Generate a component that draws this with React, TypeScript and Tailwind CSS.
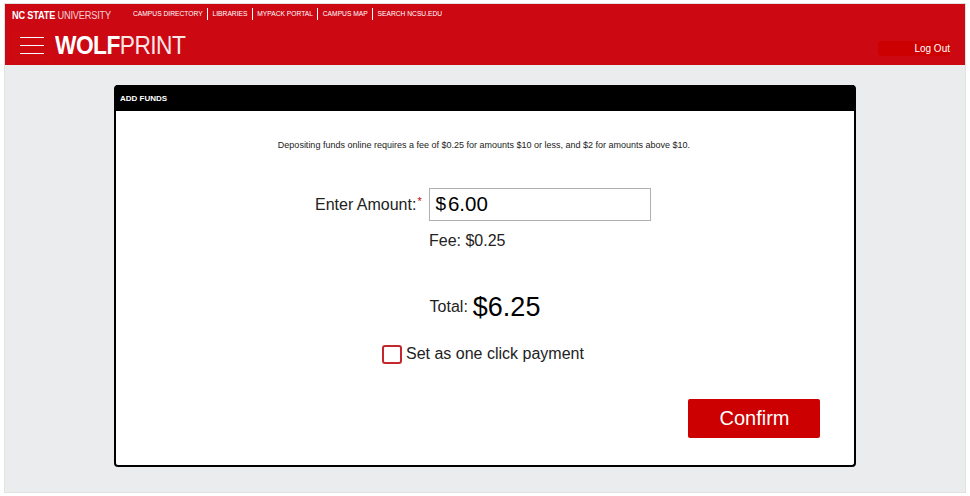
export default function App() {
  const links = ["CAMPUS DIRECTORY", "LIBRARIES", "MYPACK PORTAL", "CAMPUS MAP", "SEARCH NCSU.EDU"];
  return (
    <div className="w-[970px] h-[496px] overflow-hidden bg-white pt-1 pl-[5px] pr-[5px] font-['Liberation_Sans',sans-serif]">
      <div className="h-[488px] bg-[#ebecee] shadow-[0_0_0_1px_#e2e2e2]">
        <header className="h-[61px] bg-[#cc0813] text-white">
          <div className="flex h-[22px] items-center pl-[7px]">
            <div className="w-[121px] origin-left scale-x-[0.92] text-[10px] tracking-[-0.2px] whitespace-nowrap">
              <span className="font-bold">NC STATE</span> <span className="opacity-80">UNIVERSITY</span>
            </div>
            <nav className="-mt-[2px] flex items-center text-[6.7px] whitespace-nowrap">
              {links.map((l, i) => (
                <span key={l} className={i === 0 ? "pr-[4.5px]" : "border-l border-white px-[4.4px] leading-[12px]"}>{l}</span>
              ))}
            </nav>
          </div>
          <div className="flex h-[39px] items-center justify-between pl-[7px] pr-[15px]">
            <div className="flex items-center gap-[3px]">
              <div className="flex h-[30px] w-[40px] items-center justify-center bg-[#cc0a10]">
                <div className="flex w-[24px] flex-col gap-[6.5px]">
                  <span className="h-[1.5px] bg-white" />
                  <span className="h-[1.5px] bg-white" />
                  <span className="h-[1.5px] bg-white" />
                </div>
              </div>
              <div className="origin-left scale-x-[0.91] text-[25px] leading-none tracking-[-0.6px]">
                <span className="font-bold">WOLF</span><span className="opacity-90">PRINT</span>
              </div>
            </div>
            <div className="mt-[5px] flex h-[15px] w-[72px] items-center justify-end rounded-sm bg-[#cc0000] text-[10px]">Log Out</div>
          </div>
        </header>
        <main className="px-[109px] pt-[20px]">
          <section className="h-[382px] rounded-[4px] border-[2px] border-t-0 border-black bg-white">
            <div className="flex h-[26px] items-center bg-black pl-[4px] pt-[2px] text-[8px] font-bold text-white">ADD FUNDS</div>
            <p className="mt-[28px] pr-[2px] text-center text-[9px] leading-[12px] text-[#222]">Depositing funds online requires a fee of $0.25 for amounts $10 or less, and $2 for amounts above $10.</p>
            <div className="mt-[37px] flex items-center pl-[199px] text-[#222]">
              <span className="text-[16px]">Enter Amount:</span>
              <span className="mb-[6px] ml-[1px] w-[8px] text-[11px] text-[#cc0000]">*</span>
              <div className="ml-[4px] flex h-[33px] w-[222px] items-center border border-[#b0b0b0] pl-[5px] text-[20.5px] text-black">
                <span className="mr-[2px] text-[19px]">$</span>6.00
              </div>
            </div>
            <div className="mt-[10px] pl-[313px] text-[16px] leading-[20px] text-[#222]">Fee: $0.25</div>
            <div className="mt-[40px] flex items-center justify-center text-[#222]">
              <span className="text-[16px]">Total:</span>
              <span className="ml-[5px] text-[27px] leading-[32px] text-black">$6.25</span>
            </div>
            <div className="mt-[19px] flex items-center pl-[266px]">
              <span className="h-[19px] w-[20px] rounded-[3px] border-2 border-[#c4262e]" />
              <span className="ml-[4px] text-[16px] text-[#222]">Set as one click payment</span>
            </div>
            <div className="mt-[33px] flex justify-end pr-[34px]">
              <div className="flex h-[39px] w-[132px] items-center justify-center rounded-[2px] bg-[#cc0000] pb-[2px] pl-[1px] text-[20px] text-white">Confirm</div>
            </div>
          </section>
        </main>
      </div>
    </div>
  );
}
